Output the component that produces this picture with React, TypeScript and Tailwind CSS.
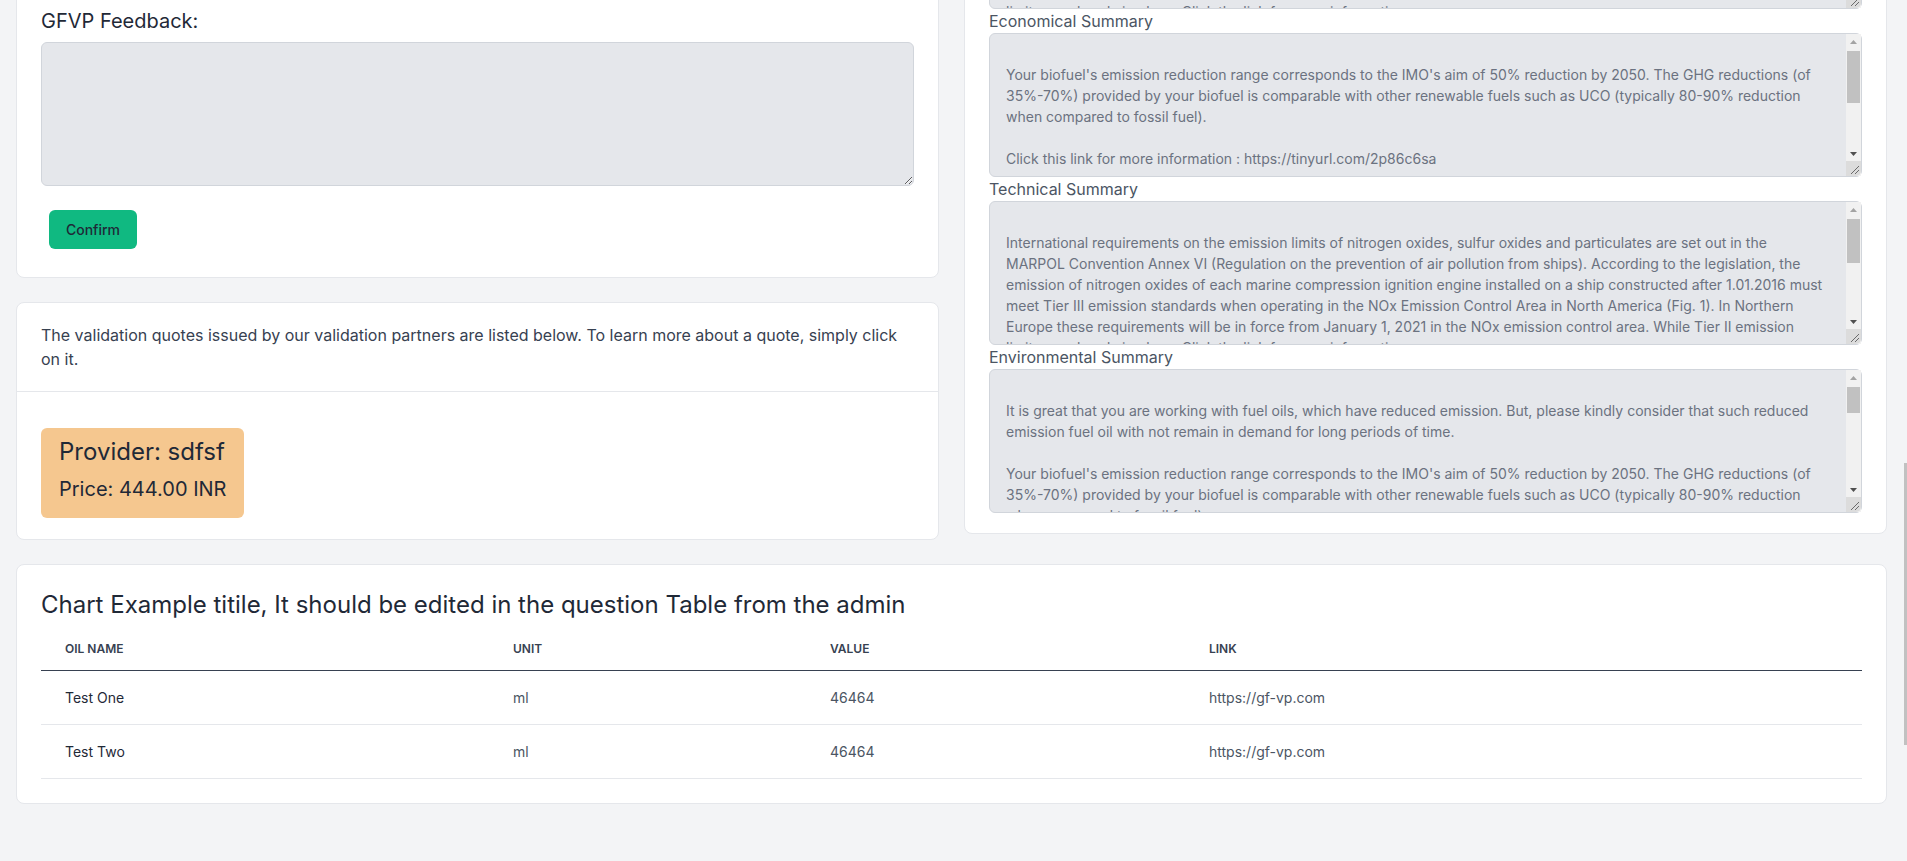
import React from "react";

const technical =
  "\nInternational requirements on the emission limits of nitrogen oxides, sulfur oxides and particulates are set out in the MARPOL Convention Annex VI (Regulation on the prevention of air pollution from ships). According to the legislation, the emission of nitrogen oxides of each marine compression ignition engine installed on a ship constructed after 1.01.2016 must meet Tier III emission standards when operating in the NOx Emission Control Area in North America (Fig. 1). In Northern Europe these requirements will be in force from January 1, 2021 in the NOx emission control area. While Tier II emission limits are already in place. Click the link for more information\n\n\n\n\n\n\n\n";

const biofuel =
  "Your biofuel's emission reduction range corresponds to the IMO's aim of 50% reduction by 2050. The GHG reductions (of 35%-70%) provided by your biofuel is comparable with other renewable fuels such as UCO (typically 80-90% reduction when compared to fossil fuel).";

const economical =
  "\n" + biofuel + "\n\nClick this link for more information : https://tinyurl.com/2p86c6sa\n\n\n\n\n\n";

const environmental =
  "\nIt is great that you are working with fuel oils, which have reduced emission. But, please kindly consider that such reduced emission fuel oil with not remain in demand for long periods of time.\n\n" +
  biofuel +
  "\n\nClick this link for more information : https://tinyurl.com/2p86c6sa\n\n\n\n\n\n\n\n\n\n\n\n\n\n\n";

const summaries = [
  { label: "Summary", text: technical, thumb: 44 },
  { label: "Economical Summary", text: economical, thumb: 52 },
  { label: "Technical Summary", text: technical, thumb: 44 },
  { label: "Environmental Summary", text: environmental, thumb: 26 },
];

const rows = [
  { name: "Test One", unit: "ml", value: "46464", link: "https://gf-vp.com" },
  { name: "Test Two", unit: "ml", value: "46464", link: "https://gf-vp.com" },
];

function ScrollTextarea({ text, thumb }: { text: string; thumb: number }) {
  return (
    <div className="relative">
      <textarea
        readOnly
        defaultValue={text}
        className="block h-[144px] w-full resize-none overflow-hidden rounded-md border border-[#d1d5db] bg-[#e5e7eb] py-[9px] pl-4 pr-[36px] text-sm leading-[21px] text-[#6b7280] outline-none"
      />
      {/* classic scrollbar drawn over the textarea's right edge */}
      <div className="absolute bottom-[1px] right-[1px] top-[1px] flex w-[15px] flex-col bg-[#f1f1f1]">
        <div className="flex h-[15px] shrink-0 items-center justify-center">
          <svg width="7" height="4" viewBox="0 0 7 4">
            <path d="M3.5 0 L7 4 L0 4 Z" fill="#a3a3a3" />
          </svg>
        </div>
        <div className="flex flex-1 flex-col px-[1px] pt-[2px]">
          <div className="w-full shrink-0 bg-[#c1c1c1]" style={{ height: thumb }} />
        </div>
        <div className="flex h-[15px] shrink-0 items-center justify-center">
          <svg width="7" height="4" viewBox="0 0 7 4">
            <path d="M0 0 L7 0 L3.5 4 Z" fill="#505050" />
          </svg>
        </div>
        <div className="flex h-[15px] shrink-0 items-end justify-end rounded-br-[5px] bg-[#dcdcdc]">
          <svg width="15" height="15" viewBox="0 0 15 15">
            <path d="M13 5 L5 13 M13 9 L9 13" stroke="#6b6b6b" strokeWidth="1" />
          </svg>
        </div>
      </div>
    </div>
  );
}

export default function App() {
  return (
    <div className="flex h-screen w-full overflow-hidden bg-[#f3f4f6] font-['Inter',sans-serif]">
      <main className="flex min-w-0 flex-1 flex-col justify-end gap-6 overflow-hidden px-4 pb-[57px]">
        <div className="grid shrink-0 grid-cols-2 items-end gap-[25px]">
          {/* Left column */}
          <div className="flex flex-col gap-6">
            <div className="rounded-lg border border-[#e5e7eb] bg-white px-6 pb-7 pt-6">
              <h3 className="text-xl leading-7 text-[#1f2937]">GFVP Feedback:</h3>
              <textarea
                readOnly
                className="mt-[7px] block h-[144px] w-full rounded-md border border-[#d1d5db] bg-[#e5e7eb] px-4 py-[9px] text-sm leading-[21px] text-[#6b7280] outline-none"
              />
              <button className="ml-2 mt-6 flex h-[39px] w-[88px] items-center justify-center rounded-md bg-[#10b981] text-sm font-medium text-[#1f2937]">
                Confirm
              </button>
            </div>

            <div className="rounded-lg border border-[#e5e7eb] bg-white">
              <p className="border-b border-[#e5e7eb] px-6 py-5 text-base leading-6 text-[#374151]">
                The validation quotes issued by our validation partners are listed below. To learn more about a quote, simply click on it.
              </p>
              <div className="px-6 pb-[21px] pt-5">
                <div className="mt-4 w-fit cursor-pointer rounded-md bg-[#f5c78f] px-[18px] pb-[15px] pt-2 text-[#1f2937]">
                  <div className="text-2xl leading-8">Provider: sdfsf</div>
                  <div className="mt-[7px] text-xl leading-7">Price: 444.00 INR</div>
                </div>
              </div>
            </div>
          </div>

          {/* Right column */}
          <div className="mb-[6px] rounded-lg border border-[#e5e7eb] bg-white px-6 pb-5 pt-6">
            {summaries.map((s, i) => (
              <div key={i}>
                <label className="block h-6 text-base leading-6 text-[#4b5563]">{s.label}</label>
                <ScrollTextarea text={s.text} thumb={s.thumb} />
              </div>
            ))}
          </div>
        </div>

        {/* Bottom card */}
        <div className="shrink-0 rounded-lg border border-[#e5e7eb] bg-white px-6 pb-6 pt-6">
          <h2 className="mb-[7px] text-2xl leading-8 text-[#1f2937]">
            Chart Example titile, It should be edited in the question Table from the admin
          </h2>
          <table className="w-full table-fixed border-collapse text-left">
            <colgroup>
              <col className="w-[448px]" />
              <col className="w-[317px]" />
              <col className="w-[379px]" />
              <col />
            </colgroup>
            <thead>
              <tr className="border-b border-[#374151]">
                <th className="px-6 py-[13px] text-xs font-semibold uppercase leading-4 text-[#374151]">Oil Name</th>
                <th className="px-6 py-[13px] text-xs font-semibold uppercase leading-4 text-[#374151]">Unit</th>
                <th className="px-6 py-[13px] text-xs font-semibold uppercase leading-4 text-[#374151]">Value</th>
                <th className="px-6 py-[13px] text-xs font-semibold uppercase leading-4 text-[#374151]">Link</th>
              </tr>
            </thead>
            <tbody>
              {rows.map((r, i) => (
                <tr key={i} className="border-b border-[#e5e7eb]">
                  <td className="px-6 py-4 text-sm leading-[21px] text-[#1f2937]">{r.name}</td>
                  <td className="px-6 py-4 text-sm leading-[21px] text-[#4b5563]">{r.unit}</td>
                  <td className="px-6 py-4 text-sm leading-[21px] text-[#4b5563]">{r.value}</td>
                  <td className="px-6 py-4 text-sm leading-[21px] text-[#4b5563]">{r.link}</td>
                </tr>
              ))}
            </tbody>
          </table>
        </div>
      </main>

      {/* page scrollbar */}
      <div className="flex w-[4px] shrink-0 flex-col">
        <div className="h-[463px] shrink-0" />
        <div className="ml-[1px] h-[282px] w-[3px] shrink-0 bg-[#c1c1c1]" />
      </div>
    </div>
  );
}
